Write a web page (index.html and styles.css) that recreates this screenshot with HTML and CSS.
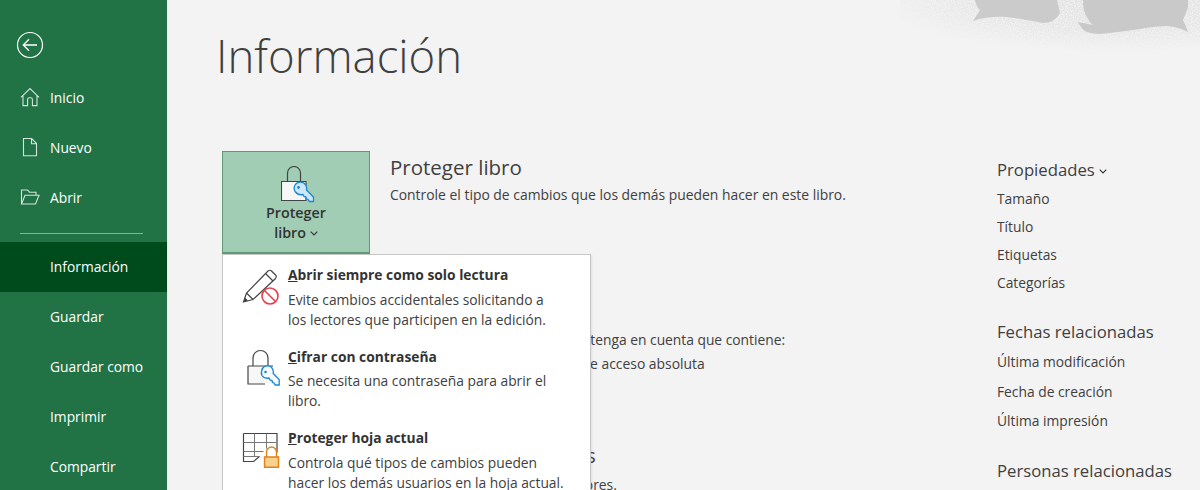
FILE: index.html
```html
<!DOCTYPE html>
<html lang="es">
<head>
<meta charset="utf-8">
<title>Información</title>
<link rel="stylesheet" href="styles.css">
</head>
<body>
<div class="app">
  <nav class="side">
    <div class="back">
      <svg width="28" height="28" viewBox="0 0 28 28" fill="none" stroke="#fff"><circle cx="14" cy="14" r="12.5" stroke-width="1.2"/><path d="M21 14H7.5M13 8.2 7.3 14l5.700 5.800" stroke-width="1.3"/></svg>
    </div>
    <a class="nav-item">
      <svg class="nav-icon" width="20" height="20" viewBox="0 0 20 20" fill="none" stroke="#d5e3da" stroke-width="1.1"><path d="M1 10.300 10 1.600l9 8.700M3 8.600v10h4.600v-6.200q0-1.600 1.600-1.600h1.600q1.600 0 1.600 1.600v6.200H17V8.600"/></svg>
      <span>Inicio</span>
    </a>
    <a class="nav-item">
      <svg class="nav-icon" width="20" height="20" viewBox="0 0 20 20" fill="none" stroke="#d5e3da" stroke-width="1.1"><path d="M3.500 1.500h8.200l4.800 5v12.200h-13zM11.500 1.500v5.200h5"/></svg>
      <span>Nuevo</span>
    </a>
    <a class="nav-item">
      <svg class="nav-icon" width="20" height="20" viewBox="0 0 20 20" fill="none" stroke="#d5e3da" stroke-width="1.1"><path d="M1.500 17V3h6l2 2.200h6.500V8M1.500 17l3.500-8.800h14L15.500 17z"/></svg>
      <span>Abrir</span>
    </a>
    <div class="nav-sep"></div>
    <a class="nav-item active"><span>Información</span></a>
    <a class="nav-item"><span>Guardar</span></a>
    <a class="nav-item"><span>Guardar como</span></a>
    <a class="nav-item"><span>Imprimir</span></a>
    <a class="nav-item"><span>Compartir</span></a>
  </nav>

  <main class="main">
    <svg class="deco" width="300" height="64" viewBox="0 0 300 64">
      <defs>
        <filter id="grain" x="0" y="0" width="100%" height="100%"><feTurbulence type="fractalNoise" baseFrequency="0.9" numOctaves="2" seed="3"/><feColorMatrix values="0 0 0 0 .76  0 0 0 0 .76  0 0 0 0 .76  3 0 0 0 -.8"/></filter>
        <radialGradient id="fade" cx=".72" cy="0" r=".8"><stop offset="0" stop-color="#fff"/><stop offset=".6" stop-color="#bbb"/><stop offset="1" stop-color="#000"/></radialGradient>
        <mask id="fadeMask"><rect width="300" height="64" fill="url(#fade)"/></mask>
      </defs>
      <rect width="300" height="64" filter="url(#grain)" mask="url(#fadeMask)"/>
      <path d="M75 0q1 6 5 10l-7 11q14-5 34-4 18 2 36 6 12 0 17-10l-3-13z" fill="#cbcbcb"/>
      <path d="M183 0q0 12 4 17 2 5 6 8l-15-3q4 8 9 10 6 2 13 2 20-2 40-5 16-3 27-3 12 1 21 6-2-6-5-12 3-7 5-13V0z" fill="#c9c9c9"/>
    </svg>
    <h1 class="title">Información</h1>
    <div class="columns">
      <div class="info">
        <section class="block">
          <div class="protect-btn">
            <svg class="protect-icon" width="36" height="38" viewBox="0 0 36 38">
              <path d="M6.500 15V7a6.500 6.500 0 0 1 13 0v8" fill="none" stroke="#444" stroke-width="1.200"/>
              <path d="M.5 15.500h24.500v19H.5z" fill="#f7f7f7" stroke="#444" stroke-width="1.100"/>
              <path d="M14 19a6.500 6.500 0 0 1 11 .5q1 2 .5 4.500l7 7v4.500h-4l-1.500-2-1.500-.5-.5-2-2-.5-1-2q-5 1-7.500-2.500-2.500-3-.5-7z" fill="#cfe6f7" stroke="#1b87d8" stroke-width="1.300"/>
              <circle cx="17.500" cy="21.500" r="1.400" fill="#1b87d8"/>
            </svg>
            <div class="btn-label">Proteger<br>libro <svg class="chev" width="8" height="5" viewBox="0 0 8 5" fill="none" stroke="#333" stroke-width="1.100"><path d="M.7.700 4 4 7.300.700"/></svg></div>
          </div>
          <div class="block-text">
            <h2 class="block-title">Proteger libro</h2>
            <p class="block-desc lead">Controle el tipo de cambios que los demás pueden hacer en este libro.</p>
          </div>
        </section>
        <section class="block block-inspect">
          <div class="btn-spacer"></div>
          <div class="block-text">
            <h2 class="block-title">Inspeccionar libro</h2>
            <p class="block-desc narrow">Antes de publicar este archivo, tenga en cuenta que contiene:</p>
            <p class="block-desc bullet">Propiedades del libro y ruta de acceso absoluta</p>
          </div>
        </section>
        <section class="block block-versions">
          <div class="btn-spacer"></div>
          <div class="block-text">
            <h2 class="block-title">Historial de versiones</h2>
            <p class="block-desc lead-wide">No hay otras versiones anteriores.</p>
          </div>
        </section>
      </div>
      <aside class="props">
        <h3 class="props-title">Propiedades <svg class="chev" width="8" height="5" viewBox="0 0 8 5" fill="none" stroke="#333" stroke-width="1.100"><path d="M.7.700 4 4 7.300.700"/></svg></h3>
        <p class="prop r28">Tamaño</p>
        <p class="prop r28">Título</p>
        <p class="prop r28">Etiquetas</p>
        <p class="prop r28">Categorías</p>
        <h3 class="props-title second">Fechas relacionadas</h3>
        <p class="prop r30">Última modificación</p>
        <p class="prop r30">Fecha de creación</p>
        <p class="prop r30">Última impresión</p>
        <h3 class="props-title third">Personas relacionadas</h3>
      </aside>
    </div>

    <div class="menu">
      <div class="menu-item">
        <svg class="menu-icon" width="38" height="38" viewBox="0 0 38 38" fill="none">
          <path d="M1.500 35 4.500 26 26 4q2-1.500 3.500 0l4 4q1.500 1.500 0 3.500L11 32.500zM4.500 26l6.500 6.500M23.500 6.500l7.500 7.500" stroke="#444" stroke-width="1.200" fill="#fff"/>
          <path d="M1.500 35 3 30.500l3 3z" fill="#444"/>
          <circle cx="28" cy="29" r="8" stroke="#e8404b" stroke-width="1.600" fill="#fff"/>
          <path d="M22.500 23.500l11 11" stroke="#e8404b" stroke-width="1.600"/>
        </svg>
        <div>
          <div class="menu-title"><u>A</u>brir siempre como solo lectura</div>
          <div class="menu-desc">Evite cambios accidentales solicitando a los lectores que participen en la edición.</div>
        </div>
      </div>
      <div class="menu-item">
        <svg class="menu-icon" width="38" height="38" viewBox="0 0 38 38" fill="none">
          <path d="M11 17V9a7.500 7.500 0 0 1 15 0v8" stroke="#444" stroke-width="1.200"/>
          <path d="M6.500 17.500h24v17h-24z" fill="#f7f7f7"/>
          <path d="M6 17h25M6 17v18h17" stroke="#444" stroke-width="1.200"/>
          <path d="M20 20a6 6 0 0 1 11 1q.6 2 .2 3.500l6 6v5.500h-4l-1.200-2-1.500-.5-.5-2-2-.5-1-2q-5 1-7-2.500-1.600-3 .5-6.500z" fill="#f7fbfe" stroke="#1b87d8" stroke-width="1.300"/>
          <circle cx="23.500" cy="23" r="1.300" fill="#1b87d8"/>
        </svg>
        <div>
          <div class="menu-title"><u>C</u>ifrar con contraseña</div>
          <div class="menu-desc">Se necesita una contraseña para abrir el libro.</div>
        </div>
      </div>
      <div class="menu-item">
        <svg class="menu-icon" width="38" height="38" viewBox="0 0 38 38" fill="none">
          <path d="M1.500 3.500h33.500v19M1.500 3.500v28h10l6-5" stroke="#444" stroke-width="1.200"/>
          <path d="M1.500 12.500h33M1.500 21.500h20M1.500 26.500h16M12.500 3.500v23M24.500 3.500v15" stroke="#777" stroke-width="1"/>
          <path d="M24.500 27v-5a5 5 0 0 1 10 0v5" stroke="#e0801a" stroke-width="1.400"/>
          <path d="M22.500 27h14v10.300h-14z" fill="#f8d28a" stroke="#e0801a" stroke-width="1.400"/>
        </svg>
        <div>
          <div class="menu-title"><u>P</u>roteger hoja actual</div>
          <div class="menu-desc">Controla qué tipos de cambios pueden hacer los demás usuarios en la hoja actual.</div>
        </div>
      </div>
    </div>
  </main>
</div>
</body>
</html>
```

FILE: styles.css
```css
* { box-sizing: border-box; }
html, body { margin: 0; padding: 0; height: 100%; overflow: hidden; }
body { font-family: "Open Sans", "Noto Sans", sans-serif; background: #f3f3f3; color: #404040; }
h1, h2, h3, p { margin: 0; font-weight: 400; }
.app { display: flex; width: 1200px; height: 490px; overflow: hidden; }

.side { width: 168px; flex: none; background: #217346; border-right: 1px solid #e9f0ec; color: #fff; font-size: 13.8px; }
.back { height: 73px; padding: 31px 0 0 16px; }
.back svg { display: block; }
.nav-item { display: flex; align-items: center; height: 50px; padding: 0 0 2px 50px; position: relative; }
.nav-icon { position: absolute; left: 20px; top: 14px; }
.nav-sep { height: 1px; width: 123px; background: #7db596; margin: 10px 0 8px 20px; }
.active { background: #004b1c; }

.main { flex: 1; position: relative; padding: 0 0 0 54px; min-width: 0; }
.deco { position: absolute; right: 0; top: 0; }
.title { font-size: 45.500px; font-weight: 300; color: #404040; line-height: 60px; padding-top: 25px; height: 151px; margin-left: -6px; }
.columns { display: flex; }
.info { width: 775px; flex: none; }
.block { display: flex; gap: 20px; }
.protect-btn { width: 148px; height: 103px; flex: none; background: #a0cdb4; border: 1px solid #5f9a78; border-bottom-width: 2px; display: flex; flex-direction: column; align-items: center; padding-top: 14px; }
.protect-icon { display: block; margin-left: 6px; }
.btn-label { text-align: center; font-size: 14.300px; line-height: 19.500px; font-weight: 600; color: #333; margin-top: -1px; }
.btn-spacer { width: 148px; flex: none; }
.chev { vertical-align: 2px; }
.block-text { padding-top: 3px; min-width: 0; }
.block-title { font-size: 20.500px; line-height: 26px; color: #404040; white-space: nowrap; }
.block-desc { font-size: 13.900px; line-height: 24px; color: #404040; white-space: nowrap; }
.narrow { font-size: 13.800px; }
.lead { margin-top: 3px; }
.lead-wide { margin-top: 5px; padding-left: 5px; }
.block-inspect { margin-top: 45px; }
.bullet { padding-left: 9px; }
.block-versions { margin-top: 63px; }

.props { padding: 6px 0 0 0; white-space: nowrap; }
.props-title { font-size: 16.700px; line-height: 26px; color: #404040; }
.second { margin-top: 22px; }
.third { margin-top: 22px; }
.prop { font-size: 13.800px; color: #404040; }
.r28 { line-height: 28px; }
.r30 { line-height: 29.500px; }
.props-title + .prop { margin-top: 2px; }

.menu { position: absolute; left: 54px; top: 254px; width: 369px; height: 270px; background: #fff; border: 1px solid #c6c6c6; box-shadow: 1px 1px 2px rgba(0,0,0,.08); padding-top: 9px; }
.menu-item { display: flex; height: 81.500px; padding-left: 19px; gap: 8px; }
.menu-icon { flex: none; margin-top: 3px; }
.menu-title { font-size: 13.800px; font-weight: 700; color: #333; line-height: 22px; }
.menu-desc { font-size: 13.800px; line-height: 20px; color: #404040; width: 277px; margin-top: 3.500px; }
```
